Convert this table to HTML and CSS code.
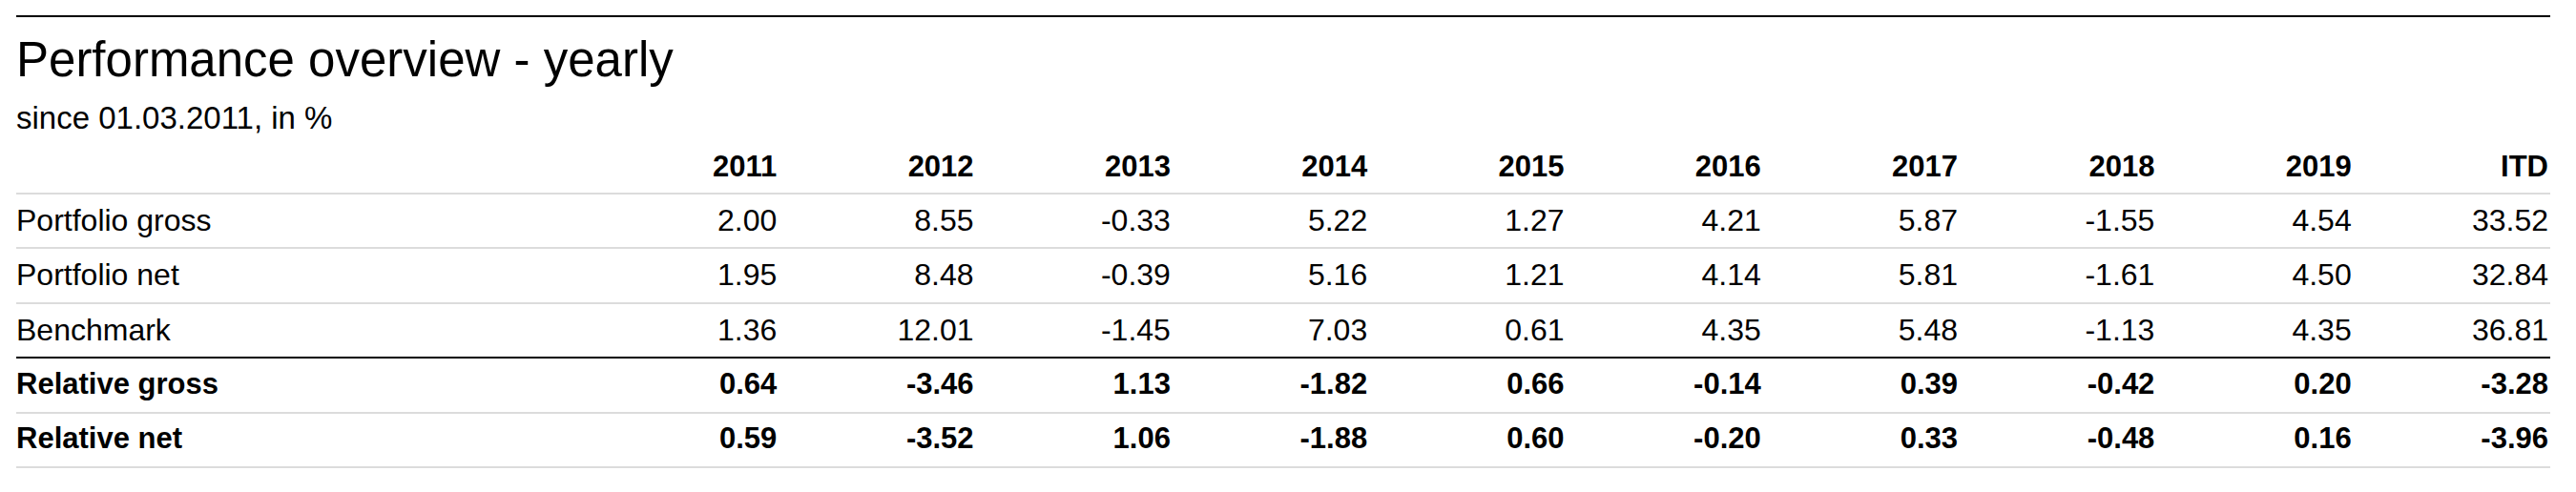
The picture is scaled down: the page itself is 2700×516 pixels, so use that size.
FILE: index.html
```html
<!DOCTYPE html>
<html lang="en">
<head>
<meta charset="utf-8">
<title>Performance overview - yearly</title>
<link rel="stylesheet" href="styles.css">
</head>
<body>
<section class="perf">
  <h1 class="perf-title">Performance overview - yearly</h1>
  <p class="perf-sub">since 01.03.2011, in %</p>
  <table class="perf-table">
    <colgroup>
      <col class="col-label">
      <col span="10" class="col-num">
    </colgroup>
    <thead>
      <tr>
        <th class="label"></th>
        <th>2011</th><th>2012</th><th>2013</th><th>2014</th><th>2015</th>
        <th>2016</th><th>2017</th><th>2018</th><th>2019</th><th>ITD</th>
      </tr>
    </thead>
    <tbody>
      <tr>
        <td class="label">Portfolio gross</td>
        <td>2.00</td><td>8.55</td><td>-0.33</td><td>5.22</td><td>1.27</td>
        <td>4.21</td><td>5.87</td><td>-1.55</td><td>4.54</td><td>33.52</td>
      </tr>
      <tr>
        <td class="label">Portfolio net</td>
        <td>1.95</td><td>8.48</td><td>-0.39</td><td>5.16</td><td>1.21</td>
        <td>4.14</td><td>5.81</td><td>-1.61</td><td>4.50</td><td>32.84</td>
      </tr>
      <tr class="last-base">
        <td class="label">Benchmark</td>
        <td>1.36</td><td>12.01</td><td>-1.45</td><td>7.03</td><td>0.61</td>
        <td>4.35</td><td>5.48</td><td>-1.13</td><td>4.35</td><td>36.81</td>
      </tr>
      <tr class="rel">
        <td class="label">Relative gross</td>
        <td>0.64</td><td>-3.46</td><td>1.13</td><td>-1.82</td><td>0.66</td>
        <td>-0.14</td><td>0.39</td><td>-0.42</td><td>0.20</td><td>-3.28</td>
      </tr>
      <tr class="rel">
        <td class="label">Relative net</td>
        <td>0.59</td><td>-3.52</td><td>1.06</td><td>-1.88</td><td>0.60</td>
        <td>-0.20</td><td>0.33</td><td>-0.48</td><td>0.16</td><td>-3.96</td>
      </tr>
    </tbody>
  </table>
</section>
</body>
</html>
```

FILE: styles.css
```css
html, body {
  margin: 0;
  padding: 0;
  background: #ffffff;
}

body {
  font-family: "Liberation Sans", Arial, Helvetica, sans-serif;
  color: #000000;
}

.perf {
  margin: 16px 27px 0 17px;
  border-top: 2px solid #000000;
}

.perf-title {
  margin: 13.7px 0 0 0;
  font-size: 51px;
  line-height: 61.2px;
  font-weight: normal;
}

.perf-sub {
  margin: 10.9px 0 0 0;
  font-size: 33px;
  line-height: 39.6px;
  font-weight: normal;
}

.perf-table {
  width: 100%;
  border-collapse: collapse;
  table-layout: fixed;
  font-size: 32px;
  line-height: 36px;
}

.col-label {
  width: 593px;
}

.perf-table th,
.perf-table td {
  padding: 8.9px 2px 10.5px 0;
  text-align: right;
  white-space: nowrap;
}

.perf-table th {
  font-weight: bold;
  font-size: 31px;
  padding-top: 13.8px;
  padding-bottom: 8.8px;
  border-bottom: 2px solid #dcdcdc;
}

.perf-table td {
  border-bottom: 2px solid #dcdcdc;
}

.perf-table .label {
  text-align: left;
  padding-left: 0;
}

.perf-table tr.last-base td {
  border-bottom: 2px solid #000000;
}

.perf-table tr.rel td {
  font-weight: bold;
  font-size: 31px;
}
```
